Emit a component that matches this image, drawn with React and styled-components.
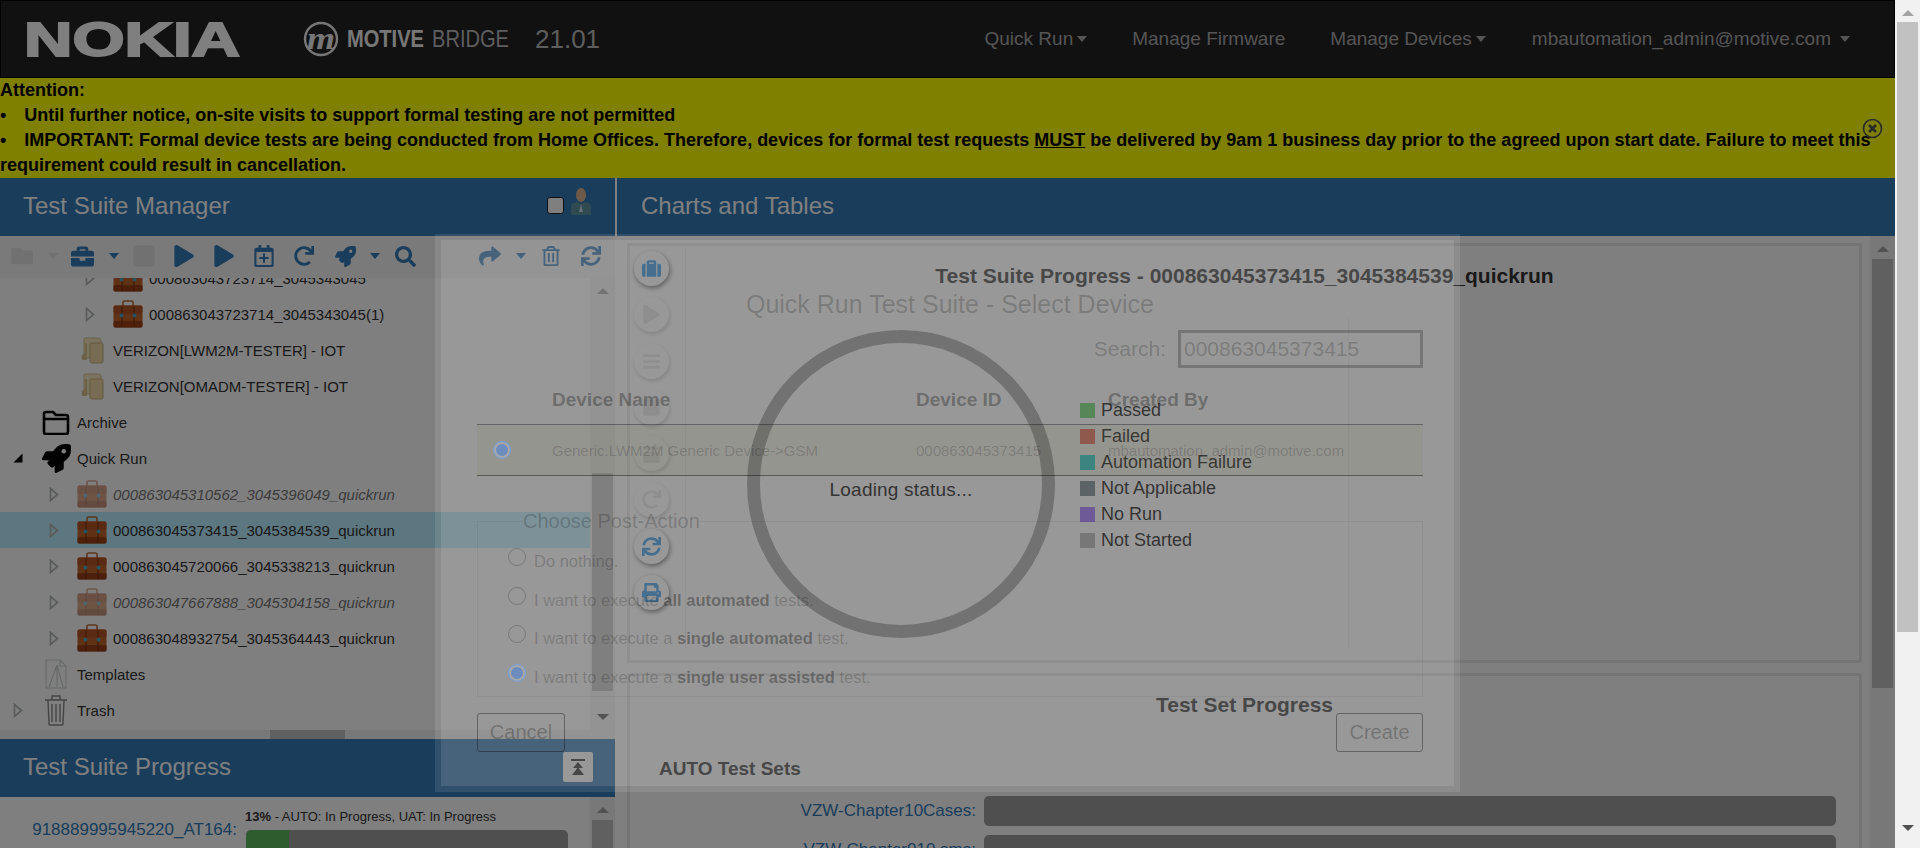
import React from "react";
import styled, { createGlobalStyle } from "styled-components";
import {
  FaFolder, FaBriefcase, FaStop, FaPlay, FaRegCalendarPlus, FaRedo, FaRocket, FaSearch,
  FaShare, FaRegTrashAlt, FaSync, FaSuitcase, FaBars, FaCalendar, FaPrint,
} from "react-icons/fa";

const Global = createGlobalStyle`
  html, body { margin: 0; padding: 0; width: 1920px; height: 848px; overflow: hidden; background: #fff; }
  body { font-family: "Liberation Sans", Arial, sans-serif; color: #333; }
  * { box-sizing: border-box; }
`;

const Shell = styled.div`display: flex; width: 1920px; height: 848px; overflow: hidden;`;
const Page = styled.div`position: relative; width: 1895px; height: 848px; overflow: hidden; display: flex; flex-direction: column; background: #fff;`;

/* browser scrollbars */
const PageBar = styled.div`width: 25px; height: 848px; background: #f1f1f1; display: flex; flex-direction: column; align-items: center; padding: 0 2px;`;
const PageThumb = styled.div`width: 21px; height: 610px; margin-top: 22px; background: #c1c1c1;`;
const Arrow = styled.div`
  width: 0; height: 0; flex: none;
  border-left: 6px solid transparent; border-right: 6px solid transparent;
  ${p => p.$down ? `border-top: 6px solid #505050;` : `border-bottom: 6px solid #a3a3a3;`}
`;
const PageBarTop = styled.div`height: 0; position: relative; top: 10px;`;
const PageBarFill = styled.div`flex: 1;`;
const PageBarEnd = styled.div`height: 17px;`;

const VBar = styled.div`width: 25px; flex: none; background: #f1f1f1; display: flex; flex-direction: column; align-items: center; padding: ${p => p.$pad || "10px 2px"};`;
const VThumb = styled.div`width: 21px; flex: none; height: ${p => p.$h}px; margin-top: ${p => p.$top}px; background: #c1c1c1;`;

/* navbar */
const Nav = styled.header`height: 78px; flex: none; background: #222; border: 1px solid #000; display: flex; align-items: center; padding-left: 22px;`;
const NokiaSvg = styled.svg`width: 218px; height: 40px; flex: none; margin-top: 1px;`;
const MotiveSvg = styled.svg`width: 206px; height: 40px; flex: none; margin-left: 62px;`;
const Version = styled.span`font-size: 26px; color: #bbb; margin-left: 26px;`;
const NavMenu = styled.nav`margin-left: auto; display: flex; align-items: center; padding-right: 44px; font-size: 19px; color: #aaa;`;
const NavItem = styled.span`display: flex; align-items: center; margin-left: ${p => p.$ml}px; white-space: nowrap;`;
const Caret = styled.i`
  display: inline-block; width: 0; height: 0; margin-left: ${p => p.$ml || 4}px;
  border-left: 5px solid transparent; border-right: 5px solid transparent; border-top: 6px solid ${p => p.$c || "#aaa"};
`;

/* banner */
const Banner = styled.section`position: relative; height: 100px; flex: none; background: #ff0; color: #000; font-size: 18px; font-weight: 700; line-height: 25px;`;
const BulletGap = styled.span`display: inline-block; width: 18px;`;
const CloseWrap = styled.div`position: absolute; left: 1862px; top: 40px; width: 21px; height: 21px; color: #555;`;

/* main */
const Main = styled.main`flex: 1; display: flex; min-height: 0;`;
const Left = styled.div`width: 615px; flex: none; display: flex; flex-direction: column; background: #fff;`;
const Divider = styled.div`width: 2px; flex: none; background: #fff;`;
const Right = styled.div`flex: 1; display: flex; flex-direction: column; min-width: 0;`;

const Head = styled.div`
  height: 58px; flex: none; background: #337ab7; color: #fff; font-size: 24px;
  display: flex; align-items: center; padding: 0 0 2px ${p => p.$pl || 23}px; position: relative;
`;
const HeadIcons = styled.div`margin-left: auto; display: flex; align-items: flex-end; padding-right: 23px; height: 27px; margin-top: -10px;`;
const MiniStop = styled.span`width: 17px; height: 17px; border-radius: 3px; background: #fff; border: 1px solid #222; display: block; margin-bottom: 1px; margin-right: 6px;`;
const CollapseBtn = styled.button`
  margin-left: auto; margin-right: 22px; width: 30px; height: 30px; border: 0; padding: 0;
  border-radius: 2px; background: #fff; display: flex; align-items: center; justify-content: center;
`;

const Toolbar = styled.div`height: 42px; flex: none; background: #f5f5f5; display: flex; align-items: center; padding: 0 0 2px 7px; color: #337ab7;`;
const ToolSlot = styled.span`
  width: ${p => p.$w}px; flex: none; display: flex; align-items: center; justify-content: center;
  font-size: ${p => p.$s || 21}px; color: ${p => p.$off ? "#e2e2e2" : "#337ab7"};
`;

const TreeWrap = styled.div`height: 461px; flex: none; display: flex; flex-direction: column;`;
const TreeMid = styled.div`flex: 1; display: flex; min-height: 0;`;
const TreeList = styled.div`flex: 1; overflow: hidden; padding-top: 0;`;
const TreeInner = styled.div`margin-top: -18px;`;
const Row = styled.div`
  height: 36px; display: flex; align-items: center; font-size: 15px; white-space: nowrap;
  padding-left: ${p => p.$l}px; color: ${p => p.$dim ? "#777" : "#333"};
  font-style: ${p => p.$dim ? "italic" : "normal"};
  background: ${p => p.$sel ? "#b8eeff" : "transparent"};
`;
const ArrowSlot = styled.span`width: 28px; flex: none; display: flex; align-items: center;`;
const IconSlot = styled.span`width: 30px; height: 30px; flex: none; margin-right: 6px; display: flex; align-items: center; justify-content: center; opacity: ${p => p.$dim ? .55 : 1};`;
const HBar = styled.div`height: 9px; flex: none; background: #f1f1f1; display: flex;`;
const HThumb = styled.div`width: 75px; margin-left: 270px; background: #c1c1c1;`;

const ProgressBody = styled.div`flex: 1; display: flex; min-height: 0; overflow: hidden;`;
const ProgressList = styled.div`flex: 1; display: grid; grid-template-columns: 237px 322px; column-gap: 9px; align-content: start; padding-top: 13px;`;
const ProgLabel = styled.a`grid-row: 1 / 3; align-self: start; margin-top: 10px; text-align: right; color: #337ab7; font-size: 17px; line-height: 20px;`;
const ProgCaption = styled.div`font-size: 13px; color: #333; line-height: 14px; white-space: nowrap; margin-bottom: 6px; margin-left: -1px;`;
const ProgTrack = styled.div`height: 30px; border-radius: 5px; background: #9e9e9e; overflow: hidden;`;
const ProgFill = styled.div`height: 100%; background: #5cb85c;`;

const Content = styled.div`flex: 1; display: flex; min-height: 0;`;
const Scroll = styled.div`flex: 1; min-width: 0; padding: 7px 8px 0 10px; overflow: hidden; display: flex; flex-direction: column; gap: 10px;`;
const Box = styled.section`
  flex: none; height: ${p => p.$h}px; border: 3px solid #e9e9e9; position: relative;
`;
const ChartBox = styled(Box)`
  background-image: linear-gradient(#eee, #eee), linear-gradient(#eee, #eee);
  background-size: 1px 402px, 1px 332px;
  background-position: 55px 0, 718px 70px;
  background-repeat: no-repeat;
`;
const BoxTitle = styled.h3`margin: 0; padding-top: ${p => p.$pt}px; text-align: center; font-size: 21px; line-height: 24px; font-weight: 700; color: #333;`;
const Legend = styled.ul`list-style: none; margin: 109px 0 0; padding: 0 0 0 450px;`;
const LegendItem = styled.li`height: 26px; display: flex; align-items: center; font-size: 18px; color: #000;`;
const Swatch = styled.span`width: 15px; height: 15px; background: ${p => p.$c}; margin-right: 6px;`;
const SubTitle = styled.h4`margin: 40px 0 0 29px; font-size: 19px; line-height: 24px; font-weight: 700; color: #333;`;
const BarGrid = styled.div`display: grid; grid-template-columns: 346px 852px; column-gap: 8px; row-gap: 9px; margin-top: 15px;`;
const BarLabel = styled.a`text-align: right; color: #337ab7; font-size: 17px; line-height: 30px; white-space: nowrap;`;
const BarTrack = styled.div`height: 30px; border-radius: 5px; background: #9e9e9e;`;

const FloatCol = styled.div`position: absolute; left: 634px; top: 251px; display: flex; flex-direction: column; gap: 11.3px; z-index: 1;`;
const FloatBtn = styled.span`
  width: 35px; height: 35px; border-radius: 50%; background: #fff; display: flex; align-items: center; justify-content: center;
  box-shadow: ${p => p.$off ? "1px 2px 4px rgba(0,0,0,.22)" : "1px 2px 5px rgba(0,0,0,.6)"};
  font-size: 19px; color: ${p => p.$off ? "rgba(190,190,190,.4)" : "#2f94e6"};
`;

/* overlay & dialog */
const Shade = styled.div`position: absolute; inset: 0; background: rgba(0,0,0,.5); z-index: 10;`;
const Modal = styled.div`
  position: absolute; left: 435px; top: 234px; width: 1025px; height: 558px; z-index: 11;
  border: 6px solid rgba(255,255,255,.1); background: rgba(255,255,255,.2); background-clip: padding-box;
  padding: 44px 31px 0 36px; color: rgba(0,0,0,.2);
`;
const ModalTitle = styled.h2`margin: 0; font-size: 25px; font-weight: 400; line-height: 40px; text-align: center; padding-right: 0;`;
const SearchRow = styled.div`display: flex; justify-content: flex-end; align-items: center; margin-top: 6px; font-size: 21px; gap: 12px;`;
const SearchInput = styled.div`width: 245px; height: 38px; border: 3px solid rgba(0,0,0,.22); display: flex; align-items: center; padding-left: 3px; color: rgba(0,0,0,.2);`;
const TableGrid = styled.div`display: grid; grid-template-columns: 75px 364px 192px 1fr; align-items: center; white-space: nowrap;`;
const TableHead = styled(TableGrid)`height: 57px; padding-top: 7px; font-size: 19px; font-weight: 700; color: rgba(0,0,0,.3); border-bottom: 1px solid rgba(0,0,0,.35);`;
const TableRow = styled(TableGrid)`height: 51px; font-size: 15px; color: rgba(0,0,0,.18); background: rgba(120,120,40,.07); border-bottom: 1px solid rgba(0,0,0,.4);`;
const Radio = styled.span`
  display: inline-block; width: 18px; height: 18px; border-radius: 50%; background: ${p => p.$on ? "#6c8dbe" : "transparent"};
  border: 1.5px solid ${p => p.$on ? "#7ea3d8" : "rgba(0,0,0,.2)"}; flex: none;
  ${p => p.$on ? "box-shadow: inset 0 0 0 2px #a8a8a8;" : ""}
  ${p => p.$shift ? `margin-left: ${p.$shift}px;` : ""}
`;
const Field = styled.fieldset`margin: 32px 0 0; padding: 14px 0 0 30px; height: 189px; border: 1px solid rgba(0,0,0,.05);`;
const FieldLegend = styled.legend`margin-left: 15px; padding: 0; font-size: 20px; line-height: 26px;`;
const Option = styled.div`height: 38.67px; display: flex; align-items: flex-start; font-size: 16.5px; gap: 8px; white-space: nowrap;`;
const OptionText = styled.span`margin-top: 4px; b { color: rgba(0,0,0,.32); }`;
const ModalActions = styled.div`display: flex; justify-content: space-between; margin-top: 16px;`;
const GhostBtn = styled.button`
  height: 39px; width: ${p => p.$w}px; padding: 0; font: 400 20px "Liberation Sans", sans-serif; color: rgba(0,0,0,.25);
  border: 1px solid rgba(0,0,0,.35); border-radius: 3px; background: transparent;
`;

const Spinner = styled.div`
  position: absolute; left: 747px; top: 330px; width: 308px; height: 308px; z-index: 12; border-radius: 50%;
  border: 13px solid rgba(0,0,0,.25); display: flex; align-items: center; justify-content: center;
  font-size: 19px; color: #333; padding-top: 12px; letter-spacing: .2px;
`;

/* drawn icons */
const TreeArrow = () => (
  <svg width="10" height="15" viewBox="0 0 10 15"><path d="M1.5 1.5 8.5 7.5 1.5 13.5Z" fill="none" stroke="#b4b8b8" strokeWidth="1.7" /></svg>
);
const OpenArrow = () => (
  <svg width="10" height="10" viewBox="0 0 10 10"><path d="M9.5 .5V9.5H.5Z" fill="#000" /></svg>
);
const Case = () => (
  <svg width="30" height="28" viewBox="0 0 30 28">
    <path d="M10 6V2.5Q10 1 11.5 1h7Q20 1 20 2.5V6" fill="none" stroke="#bb6a3a" strokeWidth="1.6" />
    <rect x=".5" y="5.5" width="29" height="22" rx="2" fill="#c2622a" />
    <rect x=".5" y="5.5" width="29" height="8" rx="2" fill="#b45525" />
    <rect x=".5" y="21" width="29" height="6.5" rx="1.5" fill="#9a4118" />
    <path d="M9 6V27M21 6V27" stroke="#7d3310" strokeWidth="1.2" />
    <circle cx="8.5" cy="15.5" r="2" fill="#4aa6c4" /><circle cx="21.5" cy="15.5" r="2" fill="#4aa6c4" />
  </svg>
);
const Pack = () => (
  <svg width="24" height="28" viewBox="0 0 24 28">
    <path d="M5 2h13q3 0 3 2v18H4V3q0-1 1-1Z" fill="#f5e6c0" stroke="#d8c494" />
    <path d="M2 20q0-1 1-2l2-1V8q0-1 1-1h1v17H3q-2 0-1-4Z" fill="#d8c28c" />
    <rect x="10" y="7" width="13" height="20" rx="1.5" fill="#f0dba8" stroke="#c9b07a" />
  </svg>
);
const ArchiveIcon = () => (
  <svg width="28" height="25" viewBox="0 0 28 25"><path d="M2 22V4q0-2 2-2h7l3 3h10q2 0 2 2v15q0 2-2 2H4q-2 0-2-2ZM2 9h24" fill="none" stroke="#000" strokeWidth="2.6" strokeLinejoin="round" /></svg>
);
const DocIcon = () => (
  <svg width="24" height="30" viewBox="0 0 24 30"><path d="M2 1h14l6 6v22H2ZM16 1v6h6M5 28l8-22M19 28 13 6M13 6v22" fill="none" stroke="#cfd2d2" strokeWidth="1.2" /></svg>
);
const BinIcon = () => (
  <svg width="24" height="32" viewBox="0 0 24 32"><path d="M1 6h22M4 6l1 24q0 1 1 1h12q1 0 1-1l1-24M8 6V2h8v4M8 10v18M12 10v18M16 10v18" fill="none" stroke="#8b8b8b" strokeWidth="1.4" /></svg>
);
const CollapseIcon = () => (
  <svg width="14" height="16" viewBox="0 0 14 16"><path d="M0 0h14v2H0ZM7 3l5 6H2ZM7 8l6 8H1Z" fill="#333" /></svg>
);
const PersonIcon = () => (
  <svg width="22" height="27" viewBox="0 0 22 27">
    <ellipse cx="11" cy="7" rx="5" ry="7" fill="#deb494" />
    <path d="M1 27V19q0-4 6-5l4 2 4-2q6 1 6 5v8Z" fill="#5e94a0" />
    <path d="M11 16l-2 8h4Z" fill="#cde" />
  </svg>
);
const CloseIcon = () => (
  <svg width="21" height="21" viewBox="0 0 21 21"><circle cx="10.5" cy="10.5" r="9" fill="none" stroke="currentColor" strokeWidth="1.6" /><path d="M7 7l7 7M14 7l-7 7" stroke="currentColor" strokeWidth="2.6" /></svg>
);

const items = [
  { l: 85, t: "000863043723714_3045343045", i: "case", a: 1 },
  { l: 85, t: "000863043723714_3045343045(1)", i: "case", a: 1 },
  { l: 49, t: "VERIZON[LWM2M-TESTER] - IOT", i: "pack" },
  { l: 49, t: "VERIZON[OMADM-TESTER] - IOT", i: "pack" },
  { l: 13, t: "Archive", i: "archive" },
  { l: 13, t: "Quick Run", i: "rocket", a: 2 },
  { l: 49, t: "000863045310562_3045396049_quickrun", i: "case", a: 1, dim: 1 },
  { l: 49, t: "000863045373415_3045384539_quickrun", i: "case", a: 1, sel: 1 },
  { l: 49, t: "000863045720066_3045338213_quickrun", i: "case", a: 1 },
  { l: 49, t: "000863047667888_3045304158_quickrun", i: "case", a: 1, dim: 1 },
  { l: 49, t: "000863048932754_3045364443_quickrun", i: "case", a: 1 },
  { l: 13, t: "Templates", i: "doc" },
  { l: 13, t: "Trash", i: "bin", a: 1 },
];
const treeIcons = {
  case: <Case />, pack: <Pack />, archive: <ArchiveIcon />, doc: <DocIcon />, bin: <BinIcon />,
  rocket: <FaRocket size={29} color="#000" />,
};
const legend = [
  ["#5cd05f", "Passed"], ["#ef5f4a", "Failed"], ["#10d0d0", "Automation Failure"],
  ["#697884", "Not Applicable"], ["#9462fd", "No Run"], ["#aaa", "Not Started"],
];

export default function App() {
  return (
    <Shell>
      <Global />
      <Page>
        <Nav>
          <NokiaSvg viewBox="0 0 218 40">
            <text x="1" y="36" fontFamily="Liberation Sans" fontWeight="700" fontSize="49" fill="#fff" stroke="#fff" strokeWidth="2" textLength="216" lengthAdjust="spacingAndGlyphs">NOKIA</text>
          </NokiaSvg>
          <MotiveSvg viewBox="0 0 206 40">
            <circle cx="18" cy="20" r="16" fill="none" stroke="#eee" strokeWidth="2.4" />
            <text x="4" y="30" fontFamily="Liberation Serif" fontStyle="italic" fontWeight="700" fontSize="32" fill="#eee" textLength="28" lengthAdjust="spacingAndGlyphs">m</text>
            <text x="44" y="28" fontFamily="Liberation Sans" fontWeight="700" fontSize="24" fill="#eee" textLength="77" lengthAdjust="spacingAndGlyphs">MOTIVE</text>
            <text x="129" y="28" fontFamily="Liberation Sans" fontSize="24" fill="#bbb" textLength="77" lengthAdjust="spacingAndGlyphs">BRIDGE</text>
          </MotiveSvg>
          <Version>21.01</Version>
          <NavMenu>
            <NavItem $ml={0}>Quick Run<Caret /></NavItem>
            <NavItem $ml={45}>Manage Firmware</NavItem>
            <NavItem $ml={45}>Manage Devices<Caret /></NavItem>
            <NavItem $ml={46}>mbautomation_admin@motive.com<Caret $ml={9} /></NavItem>
          </NavMenu>
        </Nav>

        <Banner>
          Attention:<br />
          •<BulletGap />Until further notice, on-site visits to support formal testing are not permitted<br />
          •<BulletGap />IMPORTANT: Formal device tests are being conducted from Home Offices. Therefore, devices for formal test requests <u>MUST</u> be delivered by 9am 1 business day prior to the agreed upon start date. Failure to meet this requirement could result in cancellation.
          <CloseWrap><CloseIcon /></CloseWrap>
        </Banner>

        <Main>
          <Left>
            <Head>
              Test Suite Manager
              <HeadIcons><MiniStop /><PersonIcon /></HeadIcons>
            </Head>
            <Toolbar>
              <ToolSlot $w={30} $s={22} $off><FaFolder /></ToolSlot>
              <ToolSlot $w={28}><Caret $ml={0} $c="#e2e2e2" /></ToolSlot>
              <ToolSlot $w={34} $s={23}><FaBriefcase /></ToolSlot>
              <ToolSlot $w={26}><Caret $ml={0} $c="#337ab7" /></ToolSlot>
              <ToolSlot $w={38} $s={24} $off><FaStop /></ToolSlot>
              <ToolSlot $w={42} $s={22}><FaPlay /></ToolSlot>
              <ToolSlot $w={38} $s={22}><FaPlay /></ToolSlot>
              <ToolSlot $w={42} $s={22}><FaRegCalendarPlus /></ToolSlot>
              <ToolSlot $w={38} $s={20}><FaRedo /></ToolSlot>
              <ToolSlot $w={44} $s={21}><FaRocket /></ToolSlot>
              <ToolSlot $w={12}><Caret $ml={0} $c="#337ab7" /></ToolSlot>
              <ToolSlot $w={52} $s={21}><FaSearch /></ToolSlot>
              <ToolSlot $w={37} />
              <ToolSlot $w={44} $s={22}><FaShare /></ToolSlot>
              <ToolSlot $w={14}><Caret $ml={0} $c="#337ab7" /></ToolSlot>
              <ToolSlot $w={50} $s={20}><FaRegTrashAlt /></ToolSlot>
              <ToolSlot $w={30} $s={20}><FaSync /></ToolSlot>
            </Toolbar>
            <TreeWrap>
              <TreeMid>
                <TreeList>
                  <TreeInner>
                    {items.map(it => (
                      <Row key={it.t} $l={it.l} $dim={it.dim} $sel={it.sel}>
                        <ArrowSlot>{it.a === 1 ? <TreeArrow /> : it.a === 2 ? <OpenArrow /> : null}</ArrowSlot>
                        <IconSlot $dim={it.dim}>{treeIcons[it.i]}</IconSlot>
                        {it.t}
                      </Row>
                    ))}
                  </TreeInner>
                </TreeList>
                <VBar $pad="10px 2px">
                  <Arrow />
                  <VThumb $top={179} $h={218} />
                  <PageBarFill />
                  <Arrow $down />
                </VBar>
              </TreeMid>
              <HBar><HThumb /></HBar>
            </TreeWrap>
            <Head>
              Test Suite Progress
              <CollapseBtn><CollapseIcon /></CollapseBtn>
            </Head>
            <ProgressBody>
              <ProgressList>
                <ProgLabel>918889995945220_AT164:</ProgLabel>
                <ProgCaption><b>13%</b> - AUTO: In Progress, UAT: In Progress</ProgCaption>
                <ProgTrack><ProgFill style={{ width: "13.5%" }} /></ProgTrack>
              </ProgressList>
              <VBar $pad="10px 2px 0">
                <Arrow />
                <VThumb $top={7} $h={60} />
              </VBar>
            </ProgressBody>
          </Left>
          <Divider />
          <Right>
            <Head $pl={24}>Charts and Tables</Head>
            <Content>
              <Scroll>
                <ChartBox $h={420}>
                  <BoxTitle $pt={18}>Test Suite Progress - 000863045373415_3045384539_quickrun</BoxTitle>
                  <Legend>
                    {legend.map(([c, t]) => (
                      <LegendItem key={t}><Swatch $c={c} />{t}</LegendItem>
                    ))}
                  </Legend>
                </ChartBox>
                <Box $h={300}>
                  <BoxTitle $pt={17}>Test Set Progress</BoxTitle>
                  <SubTitle>AUTO Test Sets</SubTitle>
                  <BarGrid>
                    <BarLabel>VZW-Chapter10Cases:</BarLabel><BarTrack />
                    <BarLabel>VZW-Chapter010 sms:</BarLabel><BarTrack />
                  </BarGrid>
                </Box>
              </Scroll>
              <VBar $pad="10px 2px 0">
                <Arrow />
                <VThumb $top={7} $h={429} />
              </VBar>
            </Content>
          </Right>
        </Main>

        <FloatCol>
          <FloatBtn><FaSuitcase /></FloatBtn>
          <FloatBtn $off><FaPlay /></FloatBtn>
          <FloatBtn $off><FaBars /></FloatBtn>
          <FloatBtn $off><FaStop /></FloatBtn>
          <FloatBtn $off><FaCalendar /></FloatBtn>
          <FloatBtn $off><FaRedo /></FloatBtn>
          <FloatBtn><FaSync /></FloatBtn>
          <FloatBtn><FaPrint /></FloatBtn>
        </FloatCol>

        <Shade />

        <Modal>
          <ModalTitle>Quick Run Test Suite - Select Device</ModalTitle>
          <SearchRow>Search:<SearchInput>000863045373415</SearchInput></SearchRow>
          <TableHead><span /><span>Device Name</span><span>Device ID</span><span>Created By</span></TableHead>
          <TableRow>
            <Radio $on $shift={16} />
            <span>Generic.LWM2M Generic Device-&gt;GSM</span>
            <span>000863045373415</span>
            <span>mbautomation_admin@motive.com</span>
          </TableRow>
          <Field>
            <FieldLegend>Choose Post-Action</FieldLegend>
            <Option><Radio /><OptionText>Do nothing.</OptionText></Option>
            <Option><Radio /><OptionText>I want to execute <b>all automated</b> tests.</OptionText></Option>
            <Option><Radio /><OptionText>I want to execute a <b>single automated</b> test.</OptionText></Option>
            <Option><Radio $on /><OptionText>I want to execute a <b>single user assisted</b> test.</OptionText></Option>
          </Field>
          <ModalActions>
            <GhostBtn $w={88}>Cancel</GhostBtn>
            <GhostBtn $w={87}>Create</GhostBtn>
          </ModalActions>
        </Modal>

        <Spinner>Loading status...</Spinner>
      </Page>
      <PageBar>
        <PageBarTop><Arrow /></PageBarTop>
        <PageThumb />
        <PageBarFill />
        <Arrow $down />
        <PageBarEnd />
      </PageBar>
    </Shell>
  );
}
